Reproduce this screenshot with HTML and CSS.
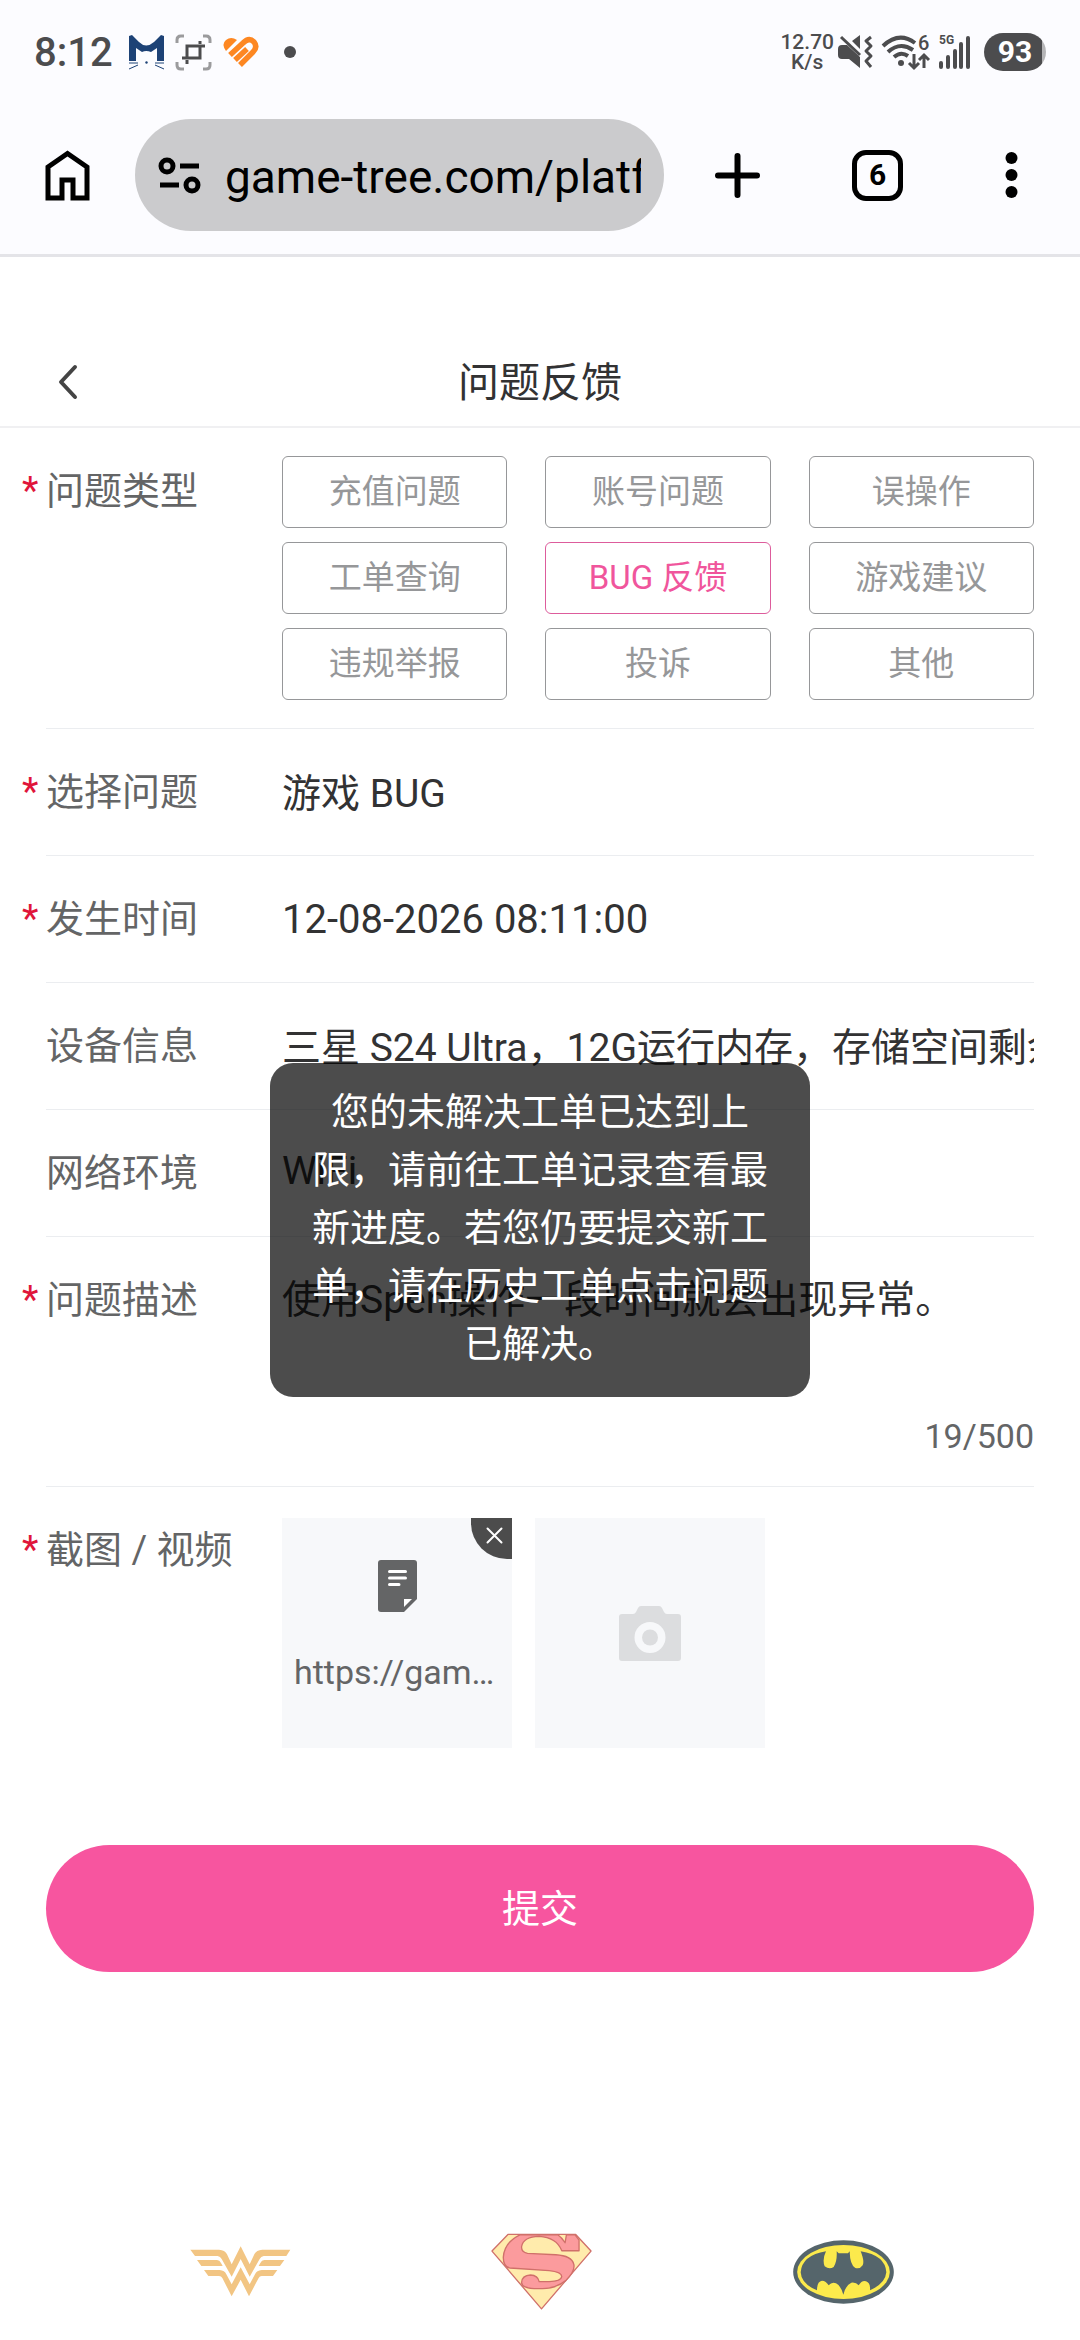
FILE: index.html
```html
<!DOCTYPE html>
<html lang="zh-CN">
<head>
  <meta charset="UTF-8">
  <meta name="viewport" content="width=device-width, initial-scale=1.0">
  <title>问题反馈</title>
  <link rel="stylesheet" href="styles.css">
</head>
<body>
  <div class="status-bar">
    <span class="clock">8:12</span>
    <div class="notices">
      <svg width="35" height="35" viewBox="0 0 35 35">
        <path d="M0 1L3 0L10 7Q17 14 25 7L32 0L35 1V26H28V13L22 17Q17 15 13 17L7 13V26H0Z" fill="#1d4276"/>
        <path d="M0 28H9M26 28H35M0 34L9 30M26 30L35 34" stroke="#1d4276" stroke-width="1"/>
        <circle cx="17.5" cy="27.5" r="1.2" fill="#1d4276"/>
      </svg>
      <svg width="35" height="35" viewBox="0 0 35 35" fill="none">
        <path d="M1 8V5Q1 1 5 1H8M27 1H30Q34 1 34 5V8M34 27V30Q34 34 30 34H27M8 34H5Q1 34 1 30V27" stroke="#9b9b9d" stroke-width="3"/>
        <path d="M11 16V11H29M24 15V23H6M11 15V23M24 11V15" stroke="#4c4c4e" stroke-width="3"/>
        <path d="M24 6V9M11 25V29" stroke="#4c4c4e" stroke-width="3"/>
      </svg>
      <svg width="35" height="31" viewBox="0 0 35 31" fill="none">
        <path d="M3 14Q-2 7 3 3Q8 -1 14 3Z" fill="#fd8722"/>
        <path d="M7 18L20 6Q26 0 31 5Q35 10 30 15L17 28M12 23L24 12" stroke="#fd8722" stroke-width="5.500"/>
      </svg>
    </div>
    <span class="more-dot"></span>
    <div class="system">
      <div class="speed"><span>12.70</span><span>K/s</span></div>
      <svg width="35" height="34" viewBox="0 0 35 34" fill="none">
        <path d="M0 14Q0 10 4 10H9L22 22V33L11 24H4Q0 24 0 20ZM14 6L22 0V14Z" fill="#4c4c4e"/>
        <path d="M3 2L22 20" stroke="#4c4c4e" stroke-width="3"/>
        <path d="M33 2L28 6L33 11L28 16L33 21L28 26L33 32" stroke="#4c4c4e" stroke-width="3" stroke-linejoin="round"/>
      </svg>
      <svg width="48" height="35" viewBox="0 0 48 35" fill="none" stroke="#4c4c4e">
        <path d="M1 11Q17 -4 33 8M6 17Q18 6 31 15M12 22Q19 16 26 21" stroke-width="4"/>
        <circle cx="19" cy="28" r="3" fill="#4c4c4e" stroke="none"/>
        <path d="M32 19V33M27 28L32 33L37 28M42 33V20M37 25L42 20L47 25" stroke-width="3"/>
        <text x="36" y="15" class="svg-six">6</text>
      </svg>
      <svg width="32" height="35" viewBox="0 0 32 35" stroke="#4c4c4e" stroke-width="4" stroke-linecap="round">
        <path d="M2 28V32M9 22V32M16 16V32M22 9V32M29 3V32"/>
        <text x="0" y="9" class="svg-net">5G</text>
      </svg>
      <span class="battery">93</span>
    </div>
  </div>

  <div class="toolbar">
    <button type="button" class="icon-btn" aria-label="Home">
      <svg width="45" height="51" viewBox="0 0 45 51" fill="none" stroke="#000" stroke-width="5">
        <path d="M3 17L22.500 3.500L42 17V48H28V30H17V48H3Z"/>
      </svg>
    </button>
    <div class="url-box">
      <svg width="43" height="37" viewBox="0 0 43 37" fill="none" stroke="#000" stroke-width="5">
        <circle cx="9" cy="9" r="6"/>
        <circle cx="34" cy="28" r="6"/>
        <path d="M22 9H41M2 28H21"/>
      </svg>
      <input type="text" class="url" aria-label="URL" value="game-tree.com/platform">
    </div>
    <div class="actions">
      <button type="button" class="icon-btn" aria-label="New tab">
        <svg width="45" height="45" viewBox="0 0 45 45" stroke="#000" stroke-width="6" stroke-linecap="round">
          <path d="M3 22.500H42M22.500 3V42"/>
        </svg>
      </button>
      <button type="button" class="tab-count">6</button>
      <button type="button" class="icon-btn" aria-label="Menu">
        <svg width="33" height="46" viewBox="0 0 33 46">
          <circle cx="16.500" cy="6" r="6"/>
          <circle cx="16.500" cy="23" r="6"/>
          <circle cx="16.500" cy="40" r="6"/>
        </svg>
      </button>
    </div>
  </div>

  <header class="nav">
    <button type="button" class="icon-btn" aria-label="返回">
      <svg width="20" height="34" viewBox="0 0 20 34" fill="none" stroke="#444" stroke-width="4" stroke-linecap="round" stroke-linejoin="round">
        <path d="M17 2L3 17L17 32"/>
      </svg>
    </button>
    <h1>问题反馈</h1>
  </header>

  <form class="form">
    <div class="row">
      <span class="label required">问题类型</span>
      <div class="types">
        <button type="button">充值问题</button>
        <button type="button">账号问题</button>
        <button type="button">误操作</button>
        <button type="button">工单查询</button>
        <button type="button" class="active">BUG 反馈</button>
        <button type="button">游戏建议</button>
        <button type="button">违规举报</button>
        <button type="button">投诉</button>
        <button type="button">其他</button>
      </div>
    </div>
    <div class="row">
      <label class="label required" for="question">选择问题</label>
      <input type="text" id="question" class="field" value="游戏 BUG">
    </div>
    <div class="row">
      <label class="label required" for="time">发生时间</label>
      <input type="text" id="time" class="field date" value="12-08-2026 08:11:00">
    </div>
    <div class="row">
      <label class="label" for="device">设备信息</label>
      <input type="text" id="device" class="field" value="三星 S24 Ultra，12G运行内存，存储空间剩余">
    </div>
    <div class="row">
      <label class="label" for="network">网络环境</label>
      <input type="text" id="network" class="field" value="WiFi">
    </div>
    <div class="row">
      <label class="label required" for="desc">问题描述</label>
      <div class="desc">
        <textarea id="desc" class="field" rows="1">使用Spen操作一段时间就会出现异常。</textarea>
        <span class="counter">19/500</span>
      </div>
    </div>
    <div class="row last">
      <span class="label required">截图 / 视频</span>
      <div class="uploads">
        <div class="tile file">
          <svg width="39" height="52" viewBox="0 0 39 52">
            <path d="M3 0H36Q39 0 39 3V39L26 52H3Q0 52 0 49V3Q0 0 3 0Z" fill="#646566"/>
            <path d="M26 39H34L26 47Z" fill="#fff"/>
            <path d="M11.500 11.500H27.500M11.500 18H27.500M11.500 24.500H21" stroke="#fff" stroke-width="3" stroke-linecap="round"/>
          </svg>
          <span class="file-name">https://game-tree.com</span>
          <button type="button" class="remove" aria-label="删除">
            <svg width="17" height="17" viewBox="0 0 17 17" stroke="#fff" stroke-width="2" stroke-linecap="round">
              <path d="M1.500 1.500L15.500 15.500M15.500 1.500L1.500 15.500"/>
            </svg>
          </button>
        </div>
        <button type="button" class="tile" aria-label="上传">
          <svg width="62" height="55" viewBox="0 0 62 55" fill="#dcdddf">
            <path fill-rule="evenodd" d="M3 8H14Q16 8 17 6L19 2Q20 0 22 0H40Q42 0 43 2L45 6Q46 8 48 8H59Q62 8 62 11V52Q62 55 59 55H3Q0 55 0 52V11Q0 8 3 8ZM31 16A15.500 15.500 0 1 0 31 47A15.500 15.500 0 1 0 31 16Z"/>
            <circle cx="31" cy="31.500" r="8"/>
          </svg>
        </button>
      </div>
    </div>
    <button type="submit" class="submit">提交</button>
  </form>

  <footer class="heroes">
    <svg width="101" height="51" viewBox="91 111 303 153" fill="#f2c583">
      <path d="M92 122H178Q196 123 202 136L216 166L243 112L270 166L284 136Q290 123 308 122H392L380 141H312Q304 142 300 150L270 203L243 150L216 203L186 150Q182 142 174 141H106Z"/>
      <path d="M112 153H172Q180 153 184 162L189 171H125ZM374 153H314Q306 153 302 162L297 171H361Z"/>
      <path d="M133 183H180Q195 184 200 196L216 226L243 175L270 226L286 196Q291 184 306 183H353L340 201H306Q300 201 297 207L268 262L243 212L216 262L188 207Q185 201 178 201H146Z"/>
    </svg>
    <svg width="101" height="77" viewBox="95 67 304 231" stroke="#d0706a" stroke-width="4" stroke-linejoin="round">
      <path fill="#ffebac" d="M146 71H350L396 121L247 295L98 121Z"/>
      <path fill="#fb9b9d" d="M182 72Q135 95 132 140Q132 168 152 172L270 180Q308 184 308 198Q306 212 270 213H240Q236 194 214 193Q188 194 187 216Q188 232 225 234H250Q290 234 320 210Q350 180 344 160Q338 135 290 132L205 128Q186 124 187 108Q192 78 240 77Q292 80 308 120H360V88L348 72H322L318 96Q308 80 296 72Z"/>
    </svg>
    <svg width="101" height="64" viewBox="73 86 303 192">
      <ellipse cx="224.500" cy="182" rx="151" ry="95" fill="#55656b"/>
      <ellipse cx="224.500" cy="182" rx="139" ry="81" fill="#fcea4c"/>
      <path fill="#55656b" d="M172 120Q100 132 96 183Q98 218 145 237Q145 210 160 208Q172 208 180 222Q190 210 202 216Q216 222 224 250Q232 220 248 214Q262 212 270 222Q280 206 292 210Q306 215 304 237Q350 216 353 183Q350 132 276 120Q288 150 282 162Q274 174 260 170Q244 162 243 120L238 126H210L204 120Q206 150 195 167Q182 176 168 165Q160 145 172 120Z"/>
    </svg>
  </footer>

  <div class="toast" role="alert">您的未解决工单已达到上限，请前往工单记录查看最新进度。若您仍要提交新工单，请在历史工单点击问题已解决。</div>
</body>
</html>
```

FILE: styles.css
```css
* {
  box-sizing: border-box;
}
body {
  margin: 0;
  min-height: 100vh;
  display: flex;
  flex-direction: column;
  position: relative;
  background: #fff;
  color: #323233;
  font-family: Roboto, "Noto Sans CJK SC", sans-serif;
}
button, input, textarea {
  font-family: inherit;
  color: inherit;
  border: none;
  background: none;
  padding: 0;
  margin: 0;
}
svg {
  display: block;
  flex: none;
  overflow: visible;
}

/* phone status bar */
.status-bar {
  height: 104px;
  padding: 0 34px;
  display: flex;
  align-items: center;
  background: #fcfcff;
  color: #4c4c4e;
}
.clock {
  font-size: 40px;
  font-weight: 500;
}
.notices {
  display: flex;
  align-items: center;
  gap: 12px;
  margin-left: 16px;
}
.more-dot {
  width: 12px;
  height: 12px;
  margin-left: 26px;
  border-radius: 50%;
  background: #4c4c4e;
}
.system {
  display: flex;
  align-items: center;
  gap: 9px;
  margin-left: auto;
}
.speed {
  display: flex;
  flex-direction: column;
  align-items: center;
  margin-right: -5px;
  font-size: 21px;
  font-weight: 500;
  line-height: 20px;
}
.svg-six {
  font-size: 20px;
  font-weight: 500;
  fill: #4c4c4e;
  stroke: none;
}
.svg-net {
  font-size: 12px;
  font-weight: 700;
  fill: #4c4c4e;
  stroke: none;
}
.battery {
  width: 62px;
  height: 38px;
  margin-left: 4px;
  border-radius: 19px;
  background: linear-gradient(90deg, #4c4c4e 93%, #b5b5b7 93%);
  color: #fff;
  font-size: 30px;
  font-weight: 700;
  line-height: 38px;
  text-align: center;
}

/* browser toolbar */
.toolbar {
  display: flex;
  align-items: center;
  padding: 15px 52px 23px 45px;
  background: #fcfcff;
  border-bottom: 3px solid #e4e4e8;
}
.url-box {
  flex: 1;
  min-width: 0;
  height: 112px;
  display: flex;
  align-items: center;
  gap: 24px;
  margin: 0 51px 0 45px;
  padding: 0 23px;
  border-radius: 56px;
  background: #cbcbcd;
}
.url {
  flex: 1;
  min-width: 0;
  padding-top: 4px;
  color: #000;
  font-size: 46px;
}
.actions {
  display: flex;
  align-items: center;
  gap: 92px;
}
.tab-count {
  width: 51px;
  height: 51px;
  border: 5px solid #000;
  border-radius: 14px;
  color: #000;
  font-size: 30px;
  font-weight: 700;
  line-height: 40px;
}

/* page header */
.nav {
  display: grid;
  grid-template-columns: 1fr auto 1fr;
  align-items: center;
  height: 171px;
  padding: 80px 58px 0;
  border-bottom: 2px solid #f0f0f2;
}
.nav h1 {
  margin: 0;
  padding-bottom: 6px;
  font-size: 41px;
  font-weight: 400;
}

/* feedback form */
.form {
  padding: 0 46px;
}
.row {
  display: flex;
  align-items: flex-start;
  border-bottom: 1px solid #ebedf0;
}
.row.last {
  border-bottom: none;
}
.label {
  width: 236px;
  flex: none;
  font-size: 38px;
  line-height: 126px;
  color: #646566;
  white-space: nowrap;
}
.label.required {
  width: 260px;
  margin-left: -24px;
}
.label.required::before {
  content: "*";
  display: inline-block;
  width: 24px;
  color: #e0153a;
}
.types {
  flex: 1;
  display: grid;
  grid-template-columns: repeat(3, 1fr);
  gap: 14px 38px;
  padding: 28px 0;
}
.types button {
  height: 72px;
  padding-bottom: 6px;
  border: 1px solid #969799;
  border-radius: 6px;
  color: #969799;
  font-size: 33px;
}
.types .active {
  border-color: #dd5c9c;
  color: #f0559c;
}
.field {
  flex: 1;
  min-width: 0;
  height: 126px;
  padding-bottom: 5px;
  font-size: 39px;
}
.date {
  padding-bottom: 0;
  font-size: 40px;
}
.desc {
  flex: 1;
  display: flex;
  flex-direction: column;
}
textarea.field {
  flex: none;
  padding-bottom: 0;
  line-height: 126px;
  resize: none;
  overflow: hidden;
}
.counter {
  padding: 48px 0 25px;
  color: #646566;
  font-size: 34px;
  line-height: 50px;
  text-align: right;
}
.uploads {
  display: flex;
  gap: 23px;
  padding-top: 31px;
}
.tile {
  position: relative;
  width: 230px;
  height: 230px;
  display: flex;
  flex-direction: column;
  align-items: center;
  justify-content: center;
  background: #f7f8fa;
}
.file {
  gap: 40px;
  padding: 0 12px 14px;
}
.file-name {
  width: 100%;
  overflow: hidden;
  text-overflow: ellipsis;
  white-space: nowrap;
  text-align: center;
  color: #646566;
  font-size: 34px;
  line-height: 40px;
}
.remove {
  position: absolute;
  top: 0;
  right: 0;
  width: 41px;
  height: 41px;
  padding: 0 0 6px 6px;
  display: flex;
  align-items: center;
  justify-content: center;
  border-bottom-left-radius: 36px;
  background: #4c4c4c;
}
.submit {
  display: block;
  width: 100%;
  height: 127px;
  margin-top: 97px;
  padding-bottom: 6px;
  border-radius: 64px;
  background: #f7559f;
  color: #fff;
  font-size: 38px;
}

/* bottom logos */
.heroes {
  display: grid;
  grid-template-columns: repeat(3, 1fr);
  place-items: center;
  margin-top: auto;
  padding: 0 86px 30px 90px;
}

.toast {
  position: absolute;
  top: 1063px;
  left: 25%;
  width: 50%;
  padding: 20px 40px 24px;
  border-radius: 23px;
  background: rgba(0, 0, 0, 0.7);
  color: #fff;
  font-size: 38px;
  line-height: 58px;
  text-align: center;
}
```
